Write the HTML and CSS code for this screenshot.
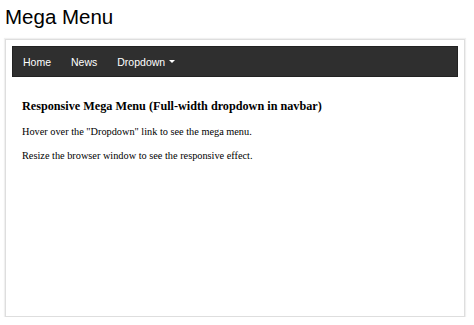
FILE: index.html
```html
<!DOCTYPE html>
<html>
<head>
<meta charset="utf-8">
<link rel="stylesheet" href="styles.css">
</head>
<body>
<h1 class="title">Mega Menu</h1>
<div class="frame">
  <nav class="navbar">
    <a class="nav-link" href="#">Home</a>
    <a class="nav-link" href="#">News</a>
    <a class="nav-link" href="#">Dropdown <span class="caret"></span></a>
  </nav>
  <div class="content">
    <h3 class="content-title">Responsive Mega Menu (Full-width dropdown in navbar)</h3>
    <p class="content-text">Hover over the "Dropdown" link to see the mega menu.</p>
    <p class="content-text">Resize the browser window to see the responsive effect.</p>
  </div>
</div>
</body>
</html>
```
FILE: styles.css
```css
html, body {
  margin: 0;
  padding: 0;
  background: #fff;
}
body {
  font-family: "Liberation Sans", Arial, sans-serif;
  padding: 5px 9px 0 5px;
}
.title {
  margin: 0;
  font-weight: normal;
  font-size: 20.5px;
  line-height: 24px;
  color: #000;
  padding-bottom: 10px;
}
.frame {
  height: 278px;
  box-sizing: border-box;
  border: 1px solid #dedede;
  box-shadow: 0 0 1px 1px #f0f0f0;
  padding: 6px 6px 0 6px;
}
.navbar {
  display: flex;
  align-items: center;
  height: 31px;
  background: #2f2f2f;
  border: 1px solid #222;
  box-sizing: border-box;
}
.nav-link {
  color: #fff;
  text-decoration: none;
  font-size: 10.5px;
  padding: 0 10px;
  display: flex;
  align-items: center;
}
.caret {
  display: inline-block;
  width: 0;
  height: 0;
  margin-left: 4px;
  border-left: 3px solid transparent;
  border-right: 3px solid transparent;
  border-top: 3px solid #fff;
}
.content {
  padding: 0 10px;
  font-family: "Liberation Serif", "Times New Roman", serif;
}
.content-title {
  font-size: 12.2px;
  margin: 22px 0 11px;
}
.content-text {
  font-size: 10.3px;
  margin: 0 0 11px;
  line-height: 13px;
}
```
